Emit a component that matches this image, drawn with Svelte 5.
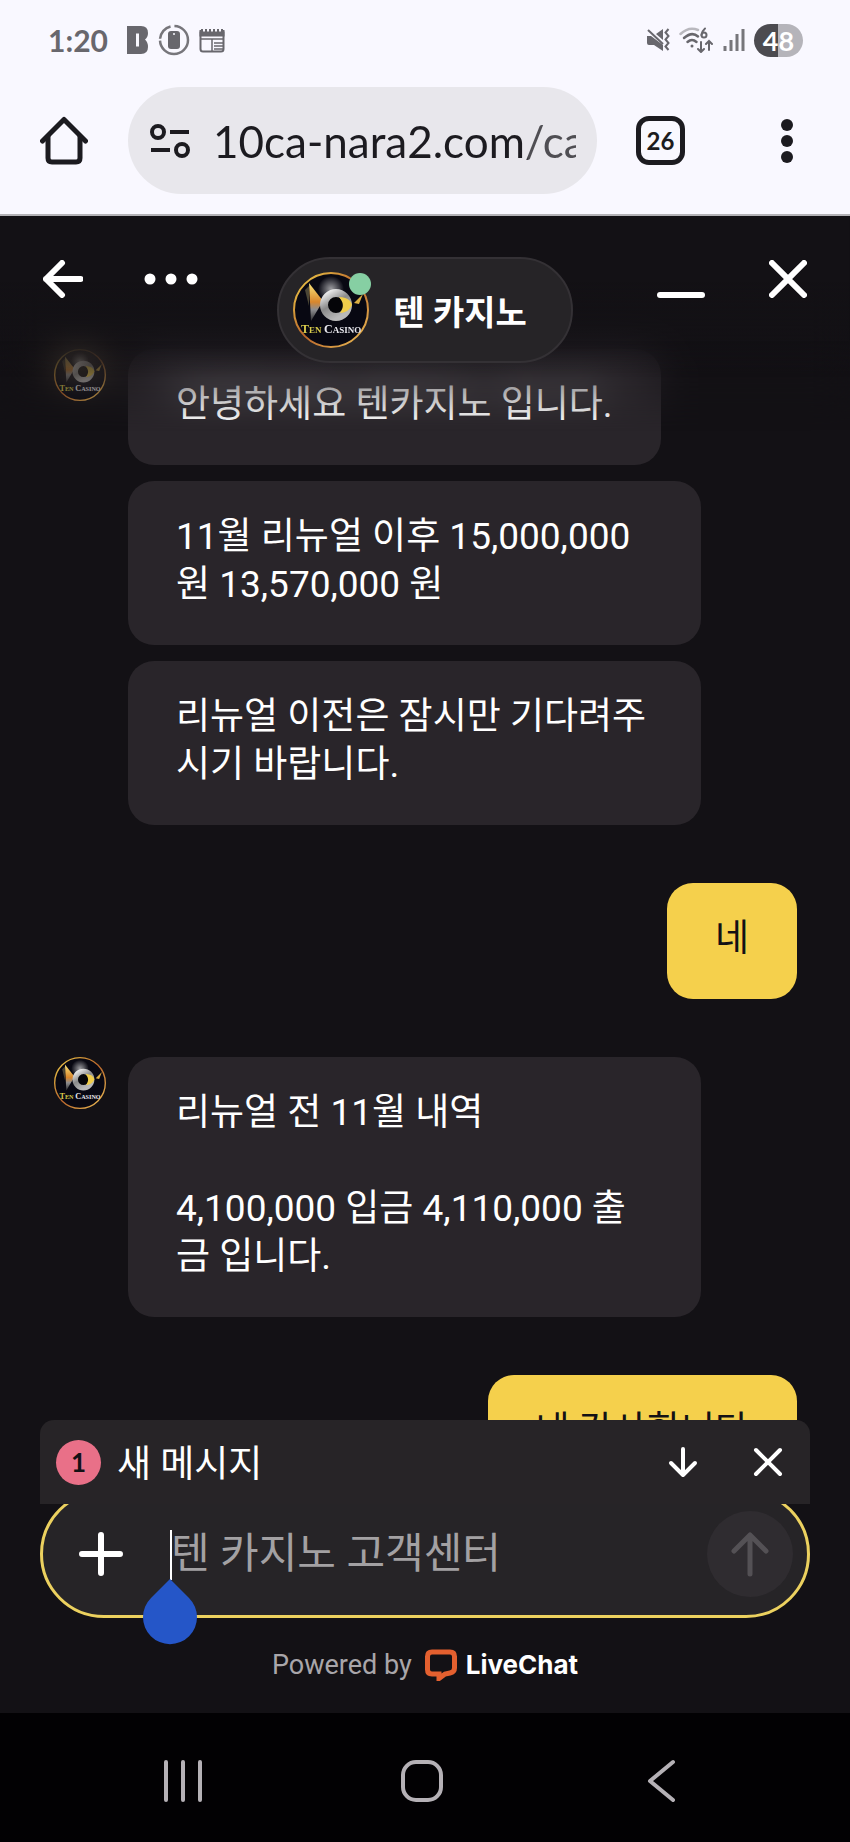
<script lang="ts">
	type Message = {
		from: 'agent' | 'me';
		text: string;
		avatar?: boolean;
		first?: boolean;
	};

	const messages: Message[] = [
		{ from: 'agent', text: '안녕하세요 텐카지노 입니다.', avatar: true, first: true },
		{ from: 'agent', text: '11월 리뉴얼 이후 15,000,000원 13,570,000 원' },
		{ from: 'agent', text: '리뉴얼 이전은 잠시만 기다려주시기 바랍니다.' },
		{ from: 'me', text: '네', first: true },
		{
			from: 'agent',
			text: '리뉴얼 전 11월 내역\n\n4,100,000 입금 4,110,000 출금 입니다.',
			avatar: true,
			first: true
		},
		{ from: 'me', text: '네 감사합니다', first: true }
	];

	let url = $state('10ca-nara2.com/ca');
	let draft = $state('');
	let unread = $state(1);
</script>

{#snippet logo()}
	<svg class="logo" viewBox="0 0 76 76" aria-hidden="true">
		<defs>
			<linearGradient id="gold" x1="0" y1="0" x2="1" y2="1">
				<stop offset="0" stop-color="#f3d34b" />
				<stop offset="0.5" stop-color="#b8642a" />
				<stop offset="1" stop-color="#f0c458" />
			</linearGradient>
			<linearGradient id="silver" x1="0" y1="0" x2="0.6" y2="1">
				<stop offset="0" stop-color="#f2f2f2" />
				<stop offset="0.5" stop-color="#8a8a8a" />
				<stop offset="1" stop-color="#b9b9b9" />
			</linearGradient>
			<linearGradient id="wing" x1="0" y1="0" x2="0" y2="1">
				<stop offset="0" stop-color="#fbe67a" />
				<stop offset="0.5" stop-color="#d9862c" />
				<stop offset="0.7" stop-color="#8d8d90" />
				<stop offset="1" stop-color="#2d2d30" />
			</linearGradient>
			<radialGradient id="shine">
				<stop offset="0" stop-color="#fff" stop-opacity="0.6" />
				<stop offset="1" stop-color="#fff" stop-opacity="0" />
			</radialGradient>
		</defs>
		<circle cx="38" cy="38" r="37" fill="#080812" stroke="url(#gold)" stroke-width="2" />
		<circle cx="38" cy="17" r="13" fill="url(#shine)" />
		<path d="M16 11 L30 29 L18 49 Z" fill="url(#wing)" />
		<path d="M12 18 L16 14 L16 34 Z" fill="#4b4636" />
		<circle cx="43" cy="33" r="12" fill="#050508" stroke="url(#silver)" stroke-width="8" />
		<path d="M46 25 C56 25 59 31 59 33 C57 38 52 41 47 41 C51 35 51 31 46 25 Z" fill="#f0cd4a" />
		<path d="M61 31 L70 22 L66 32 Z" fill="#dcae42" />
		<text x="8" y="61" class="logo-text" fill="#d8cb4c">T<tspan font-size="9">EN</tspan></text>
		<text x="31" y="61" class="logo-text" fill="#e9e9ef">C<tspan font-size="9">ASINO</tspan></text>
	</svg>
{/snippet}

<div class="phone">
	<div class="status-bar">
		<span class="time">1:20</span>
		<svg width="22" height="30" viewBox="0 0 22 30" fill="#68676d">
			<path
				fill-rule="evenodd"
				d="M0 1 H14 Q21 1 21 8 Q21 12 18 14.500 Q21 17 21 22 Q21 29 14 29 H0 Z M9 8.500 V21.500 H12 V8.500 Z"
			/>
		</svg>
		<svg width="32" height="32" viewBox="0 0 32 32" fill="none">
			<circle
				cx="16"
				cy="16"
				r="14"
				stroke="#77767b"
				stroke-width="2.500"
				stroke-dasharray="65 2 17 4"
				stroke-dashoffset="22"
			/>
			<rect x="10" y="7" width="12" height="18" rx="3" fill="#68676d" />
			<circle cx="16" cy="10" r="1" fill="#f9f8ff" />
		</svg>
		<svg width="26" height="26" viewBox="0 0 26 26" fill="none" stroke="#68676d">
			<path d="M1.500 3 V22 Q1.500 24.500 4 24.500 H22 Q24.500 24.500 24.500 22 V3" stroke-width="2" />
			<path d="M0.500 7 H25.500" stroke-width="5" />
			<path d="M2 3.500 H25" stroke-width="3" stroke-dasharray="2 2" />
			<path d="M2 12 H24 M13 12 V24 M15 16 H24 M15 19 H24 M15 22 H24" stroke-width="1.500" />
		</svg>

		<div class="status-right">
			<svg width="24" height="24" viewBox="0 0 24 24" fill="#68676d">
				<path d="M1 8 H5 L17 17 V23 L8 17 H3 Q1 17 1 15 Z" />
				<path d="M10 6 L17 1 V12 Z" />
				<path d="M2 2 L17 16" stroke="#68676d" stroke-width="2" />
				<path
					d="M22.500 1 L19.500 4.500 L22.500 8 L19.500 11.500 L22.500 15 L19.500 18.500 L22.500 22"
					fill="none"
					stroke="#68676d"
					stroke-width="2"
				/>
			</svg>
			<svg width="35" height="26" viewBox="0 0 35 26" fill="none" stroke-linecap="round">
				<path d="M1.500 7 Q10 -1 19 3" stroke="#b9b8be" stroke-width="2.500" />
				<path d="M5 11 Q13 4 19 9.500" stroke="#68676d" stroke-width="2.500" />
				<path d="M8.500 15 Q13 11 17.500 15" stroke="#68676d" stroke-width="2.500" />
				<circle cx="13" cy="19" r="1.500" fill="#68676d" />
				<path d="M26 1.500 Q23 4 22.500 8" stroke="#68676d" stroke-width="2" />
				<circle cx="25" cy="8" r="2.500" stroke="#68676d" stroke-width="2" />
				<path
					d="M22 15 V24.500 M19 22 L22 25 L25 22 M30 23 V14 M27 17 L30 14 L33 17"
					stroke="#68676d"
					stroke-width="2"
				/>
			</svg>
			<svg width="22" height="24" viewBox="0 0 22 24" stroke="#77767b" stroke-width="3">
				<path d="M2 18 V23 M8 12 V23 M14 6 V23 M20 1 V23" />
			</svg>
			<span class="battery">48</span>
		</div>
	</div>

	<div class="toolbar">
		<button aria-label="홈">
			<svg width="48" height="50" viewBox="0 0 48 50" fill="none" stroke="#1c1b20">
				<path d="M2.500 25 L24 3.500 L45.500 25" stroke-width="5" stroke-linejoin="round" stroke-linecap="round" />
				<path d="M8 20 V42 Q8 46 12 46 H36 Q40 46 40 42 V20" stroke-width="5" />
			</svg>
		</button>
		<label class="address">
			<svg width="42" height="36" viewBox="0 0 42 36" fill="none" stroke="#1c1b20" stroke-width="4">
				<circle cx="9" cy="9" r="6" />
				<circle cx="33" cy="27" r="6" />
				<path d="M21 9 H40 M2 27 H21" />
			</svg>
			<input type="text" bind:value={url} aria-label="주소" spellcheck="false" />
		</label>
		<button class="tabs" aria-label="탭 26개">26</button>
		<button class="kebab" aria-label="더보기">
			<svg width="48" height="48" viewBox="0 0 48 48" fill="#1c1b20">
				<circle cx="24" cy="8" r="6" />
				<circle cx="24" cy="24" r="6" />
				<circle cx="24" cy="40" r="6" />
			</svg>
		</button>
	</div>

	<main class="chat">
		<header class="chat-header">
			<div class="header-side">
				<button aria-label="뒤로">
					<svg width="40" height="38" viewBox="0 0 40 38" class="line">
						<path d="M37.500 19 H3 M19 3 L3 19 L19 35" />
					</svg>
				</button>
				<button aria-label="메뉴">
					<svg width="56" height="12" viewBox="0 0 56 12" fill="#fff">
						<circle cx="7" cy="6" r="5.500" />
						<circle cx="28" cy="6" r="5.500" />
						<circle cx="49" cy="6" r="5.500" />
					</svg>
				</button>
			</div>
			<div class="profile">
				<div class="profile-photo">
					{@render logo()}
					<span class="online"></span>
				</div>
				<h1>텐 카지노</h1>
			</div>
			<div class="header-side right">
				<button aria-label="최소화">
					<svg width="48" height="38" viewBox="0 0 48 38" class="line">
						<path d="M3 35 H45" />
					</svg>
				</button>
				<button aria-label="닫기">
					<svg width="38" height="38" viewBox="0 0 38 38" class="line">
						<path d="M3 3 L35 35 M35 3 L3 35" />
					</svg>
				</button>
			</div>
		</header>

		<div class="messages">
			{#each messages as message}
				<div class="row {message.from}" class:first={message.first}>
					{#if message.from === 'agent'}
						<div class="avatar">
							{#if message.avatar}
								{@render logo()}
							{/if}
						</div>
					{/if}
					<p class="bubble">{message.text}</p>
				</div>
			{/each}
		</div>

		<footer>
			{#if unread > 0}
				<div class="new-message">
					<span class="badge">{unread}</span>
					<span class="new-label">새 메시지</span>
					<button aria-label="아래로">
						<svg width="30" height="32" viewBox="0 0 30 32" class="line thin">
							<path d="M15 3 V28 M3 17 L15 29 L27 17" />
						</svg>
					</button>
					<button aria-label="알림 닫기" onclick={() => (unread = 0)}>
						<svg width="30" height="30" viewBox="0 0 30 30" class="line thin">
							<path d="M3 3 L27 27 M27 3 L3 27" />
						</svg>
					</button>
				</div>
			{/if}
			<div class="composer">
				<button aria-label="첨부">
					<svg width="44" height="44" viewBox="0 0 44 44" class="line">
						<path d="M22 3 V41 M3 22 H41" />
					</svg>
				</button>
				<div class="field">
					<input type="text" bind:value={draft} placeholder="텐 카지노 고객센터" aria-label="메시지" />
					<span class="caret"></span>
					<svg class="handle" width="54" height="66" viewBox="0 0 54 66" aria-hidden="true">
						<path d="M27 0 L46 19 A27 27 0 1 1 8 19 Z" fill="#2556c8" />
					</svg>
				</div>
				<button class="send" aria-label="보내기">
					<svg width="38" height="46" viewBox="0 0 38 46" fill="none">
						<path
							d="M19 43 V4 M3 20 L19 4 L35 20"
							stroke="#545155"
							stroke-width="5"
							stroke-linecap="round"
							stroke-linejoin="round"
						/>
					</svg>
				</button>
			</div>
			<div class="powered">
				<span>Powered by</span>
				<a href="#livechat">
					<svg width="32" height="32" viewBox="0 0 32 32" fill="none" stroke="#e4602f">
						<path
							d="M7 3 H25 Q29.500 3 29.500 7.500 V19 Q29.500 23 25 24 L20 25 L14 29.500 V25 H7 Q2.500 25 2.500 20.500 V7.500 Q2.500 3 7 3 Z"
							stroke-width="5"
						/>
					</svg>
					LiveChat
				</a>
			</div>
		</footer>
	</main>

	<nav>
		<button aria-label="최근 앱">
			<svg width="44" height="44" viewBox="0 0 44 44">
				<path d="M5 3 V41 M22 3 V41 M39 3 V41" />
			</svg>
		</button>
		<button aria-label="홈 화면">
			<svg width="44" height="44" viewBox="0 0 44 44">
				<rect x="3" y="3" width="38" height="38" rx="13" />
			</svg>
		</button>
		<button aria-label="이전">
			<svg width="44" height="44" viewBox="0 0 44 44">
				<path d="M34 3 L11 22 L34 41" />
			</svg>
		</button>
	</nav>
</div>

<style>
	:global(body) {
		margin: 0;
		background: #000;
	}

	.phone {
		display: flex;
		flex-direction: column;
		height: 100vh;
		font-family: Roboto, 'Noto Sans CJK KR', sans-serif;
		background: #f9f8ff;
	}
	button {
		display: flex;
		align-items: center;
		justify-content: center;
		padding: 0;
		border: 0;
		background: none;
		color: inherit;
		cursor: pointer;
	}
	svg {
		display: block;
		flex: none;
	}
	.line {
		fill: none;
		stroke: #fff;
		stroke-width: 6;
		stroke-linecap: round;
		stroke-linejoin: round;
	}
	.line.thin {
		stroke-width: 4;
	}

	/* status bar */
	.status-bar {
		display: flex;
		align-items: center;
		height: 80px;
		padding: 0 47px 0 48px;
		gap: 9px;
	}
	.time {
		margin-right: 10px;
		font: 700 30px Lato, sans-serif;
		color: #68676d;
	}
	.status-right {
		display: flex;
		align-items: center;
		gap: 9px;
		margin-left: auto;
	}
	.battery {
		width: 49px;
		border-radius: 17px;
		background: linear-gradient(to right, #4c4b50 48%, #b5b4ba 48%);
		color: #fff;
		font: 700 27px/33px Lato, sans-serif;
		text-align: center;
	}

	/* browser toolbar */
	.toolbar {
		display: flex;
		align-items: center;
		height: 121px;
		padding: 0 39px 13px 40px;
		border-bottom: 2px solid #b3b2b6;
	}
	.address {
		display: flex;
		flex: 1;
		align-items: center;
		gap: 22px;
		min-width: 0;
		height: 107px;
		margin: 0 39px 0 40px;
		padding: 0 21px;
		box-sizing: border-box;
		border-radius: 54px;
		background: #e8e7ec;
	}
	.address input {
		flex: 1;
		min-width: 0;
		padding: 0;
		border: 0;
		outline: 0;
		background: none;
		color: #1c1b20;
		font: 400 44px Lato, sans-serif;
		mask-image: linear-gradient(to right, #000 86%, rgba(0, 0, 0, 0.75) 87%);
	}
	.tabs {
		width: 49px;
		height: 49px;
		border: 5px solid #1c1b20;
		border-radius: 13px;
		color: #1c1b20;
		font: 700 24px Lato, sans-serif;
	}
	.kebab {
		margin-left: 78px;
	}

	/* chat */
	.chat {
		position: relative;
		display: flex;
		flex: 1;
		flex-direction: column;
		min-height: 0;
		background: #131115;
		color: #fff;
	}
	.chat-header {
		position: absolute;
		inset: 0 0 auto;
		z-index: 1;
		display: grid;
		grid-template-columns: 1fr auto 1fr;
		padding: 41px 43px 68px;
	}
	.chat-header::before {
		content: '';
		position: absolute;
		inset: 0;
		z-index: -1;
		backdrop-filter: blur(20px);
		background: linear-gradient(to bottom, #131115 30%, rgba(19, 17, 21, 0) 75%);
		mask-image: linear-gradient(to bottom, #000 58%, transparent);
	}
	.header-side {
		display: flex;
		gap: 60px;
		align-items: center;
		height: 44px;
	}
	.header-side.right {
		justify-content: flex-end;
		gap: 64px;
	}
	.profile {
		display: flex;
		align-items: center;
		gap: 24px;
		padding: 13px 44px 13px 14px;
		border: 2px solid #343135;
		border-radius: 54px;
		background: #262427;
	}
	.profile-photo {
		position: relative;
		width: 76px;
		height: 76px;
	}
	.logo {
		width: 100%;
		height: 100%;
	}
	.logo-text {
		font: 700 12px 'Liberation Serif', serif;
	}
	.online {
		position: absolute;
		top: 1px;
		right: -2px;
		width: 22px;
		height: 22px;
		border-radius: 50%;
		background: #86cfa3;
	}
	h1 {
		margin: 0;
		padding-top: 6px;
		font-size: 34px;
		line-height: 48px;
	}

	.messages {
		flex: 1;
		min-height: 0;
		padding: 75px 53px 0 54px;
		overflow: hidden;
	}
	.row {
		display: flex;
		gap: 22px;
		margin-top: 16px;
	}
	.row.first {
		margin-top: 58px;
	}
	.row.me {
		justify-content: flex-end;
	}
	.avatar {
		flex: none;
		width: 52px;
		height: 52px;
	}
	.bubble {
		max-width: 573px;
		margin: 0;
		padding: 32px 48px 36px;
		box-sizing: border-box;
		border-radius: 26px;
		background: #29252a;
		font-size: 37px;
		line-height: 48px;
		white-space: pre-wrap;
	}
	.me .bubble {
		background: #f5d04c;
		color: #131115;
	}

	/* footer */
	footer {
		padding: 0 40px;
	}
	.new-message {
		position: relative;
		z-index: 1;
		display: flex;
		align-items: center;
		height: 84px;
		margin-bottom: -14px;
		padding: 0 27px 0 16px;
		border-radius: 14px 14px 0 0;
		background: #272427;
	}
	.badge {
		width: 45px;
		border-radius: 50%;
		background: #e97088;
		color: #131115;
		font: 700 26px/45px Lato, sans-serif;
		text-align: center;
	}
	.new-label {
		flex: 1;
		margin-left: 16px;
		padding-top: 6px;
		font-size: 37px;
		line-height: 48px;
	}
	.new-message button + button {
		margin-left: 55px;
	}
	.composer {
		display: flex;
		align-items: center;
		height: 128px;
		padding: 0 14px 0 36px;
		box-sizing: border-box;
		border: 3px solid #ecd15f;
		border-radius: 64px;
		background: #262427;
	}
	.field {
		position: relative;
		flex: 1;
		margin: 0 24px 0 48px;
	}
	.field input {
		display: block;
		width: 100%;
		padding: 0;
		border: 0;
		outline: 0;
		background: none;
		color: #fff;
		font: 400 42px/56px Roboto, 'Noto Sans CJK KR', sans-serif;
	}
	.field input::placeholder {
		color: #a3a1a3;
		opacity: 1;
	}
	.caret {
		position: absolute;
		top: 4px;
		left: -1px;
		width: 2px;
		height: 50px;
		background: #fff;
	}
	.handle {
		position: absolute;
		top: 53px;
		left: -28px;
	}
	.send {
		width: 86px;
		height: 86px;
		border-radius: 50%;
		background: #2f2c30;
	}
	.powered {
		display: flex;
		align-items: center;
		justify-content: center;
		gap: 13px;
		height: 95px;
		padding-bottom: 2px;
		box-sizing: border-box;
		color: #a9a6aa;
		font-size: 27px;
	}
	.powered a {
		display: flex;
		align-items: center;
		gap: 9px;
		color: #fff;
		font: 700 26px Inter, sans-serif;
		text-decoration: none;
	}

	/* system navigation */
	nav {
		display: flex;
		height: 129px;
		padding: 6px 70px 0 64px;
		box-sizing: border-box;
		background: #020103;
	}
	nav button {
		flex: 1;
	}
	nav svg {
		fill: none;
		stroke: #b5b1b6;
		stroke-width: 4;
		stroke-linecap: round;
		stroke-linejoin: round;
	}
</style>
